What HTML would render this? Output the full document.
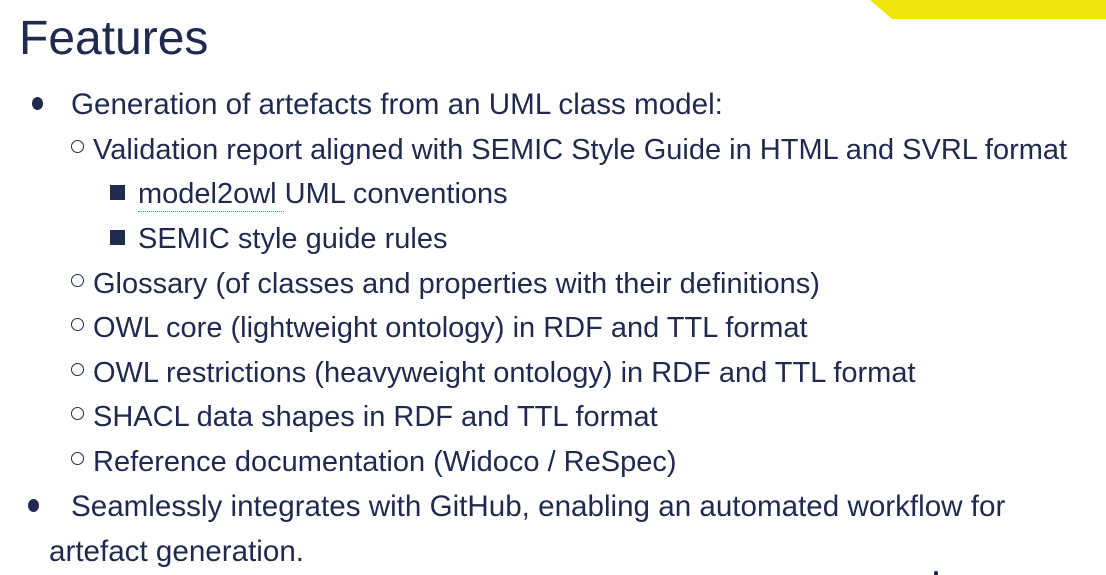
<!DOCTYPE html>
<html><head><meta charset="utf-8"><style>
body{margin:0;width:1106px;height:575px;background:#fff;overflow:hidden;position:relative;font-family:"Liberation Sans",sans-serif;color:#1f2a4e}
.l{position:absolute;white-space:nowrap;font-size:29px;line-height:40px;height:40px;margin-top:2px}
.t{font-size:29.6px}
.dot{position:absolute;width:11px;height:13px;border-radius:50%;background:#1f2a4e}
.c{position:absolute;width:11px;height:11px;border:1.6px solid #1f2a4e;border-radius:50%}
.s{position:absolute;width:15px;height:15px;background:#1f2a4e}
</style></head><body>
<div style="position:absolute;left:0;top:0;width:1106px;height:19px;background:#ede50b;clip-path:polygon(870px 0,1106px 0,1106px 19px,892px 19px)"></div>
<div style="position:absolute;left:19px;top:11px;font-size:48px;line-height:56px;color:#1f2a4e">Features</div>

<div class="dot" style="left:32px;top:97px"></div>
<div class="l t" style="left:71px;top:83px">Generation of artefacts from an UML class model:</div>

<div class="c" style="left:71px;top:140px"></div>
<div class="l" style="left:93px;top:128px">Validation report aligned with SEMIC Style Guide in HTML and SVRL format</div>

<div class="s" style="left:110px;top:185px"></div>
<div class="l" style="left:138px;top:172px">model2owl UML conventions</div>
<div style="position:absolute;left:138px;top:211px;width:146px;height:0;border-bottom:1.5px dotted #e05050"></div>

<div class="s" style="left:110px;top:230px"></div>
<div class="l" style="left:138px;top:217px">SEMIC style guide rules</div>

<div class="c" style="left:71px;top:274px"></div>
<div class="l" style="left:93px;top:262px">Glossary (of classes and properties with their definitions)</div>
<div class="c" style="left:71px;top:318px"></div>
<div class="l" style="left:93px;top:306px">OWL core (lightweight ontology) in RDF and TTL format</div>
<div class="c" style="left:71px;top:363px"></div>
<div class="l" style="left:93px;top:351px">OWL restrictions (heavyweight ontology) in RDF and TTL format</div>
<div class="c" style="left:71px;top:407px"></div>
<div class="l" style="left:93px;top:395px">SHACL data shapes in RDF and TTL format</div>
<div class="c" style="left:71px;top:452px"></div>
<div class="l" style="left:93px;top:440px">Reference documentation (Widoco / ReSpec)</div>

<div class="dot" style="left:28px;top:499px"></div>
<div class="l t" style="left:71px;top:485px">Seamlessly integrates with GitHub, enabling an automated workflow for</div>
<div class="l t" style="left:49px;top:530px">artefact generation.</div>
<div style="position:absolute;left:934px;top:571px;width:4px;height:4px;background:#1f2a4e;border-radius:2px 2px 0 0"></div>
</body></html>
